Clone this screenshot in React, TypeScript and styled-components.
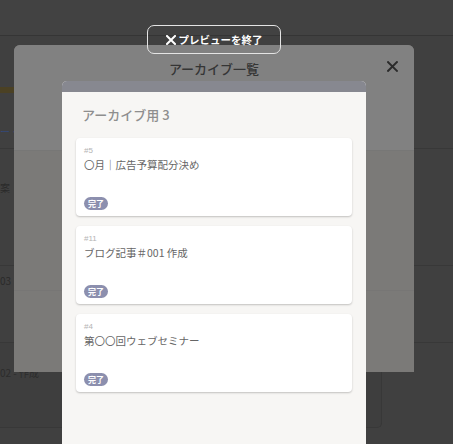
import React from 'react';
import styled, { createGlobalStyle } from 'styled-components';

const GlobalStyle = createGlobalStyle`
  html, body {
    margin: 0;
    padding: 0;
    background: #414141;
    font-family: "Noto Sans CJK JP", "Noto Sans", sans-serif;
  }
  * { box-sizing: border-box; }
`;

const Screen = styled.div`
  position: relative;
  width: 453px;
  height: 444px;
  overflow: hidden;
  background: #404040;
`;

// board behind the dimmed modal
const TopBar = styled.div`
  height: 36px;
  background: #424242;
  border-bottom: 1px solid #353535;
`;

const Board = styled.div`
  display: flex;
  flex-direction: column;
`;

const GoldStrip = styled.div`
  margin-top: 51px;
  height: 6px;
  width: 60px;
  background: #4b4124;
`;

const BoardRow = styled.div<{ $h: number; $pad: number }>`
  height: ${p => p.$h}px;
  padding-top: ${p => p.$pad}px;
  border-bottom: 1px solid #383838;
  font-size: 10px;
  line-height: 14px;
  color: #2a2a2a;
`;

const BlueText = styled.span`
  color: #34497a;
  font-size: 10px;
`;

const BoardCard = styled.div`
  margin-top: 0;
  width: 382px;
  height: 85px;
  border-radius: 0 0 5px 0;
  background: #3e3e3e;
  border-right: 1px solid #383838;
  border-bottom: 1px solid #383838;
  font-size: 10px;
  line-height: 14px;
  color: #2c2c2c;
  padding-top: 23px;
`;

// the dimmed modal
const Modal = styled.div`
  position: absolute;
  left: 14px;
  top: 45px;
  width: 400px;
  height: 327px;
  border-radius: 6px 6px 0 0;
  background: #7b7a78;
  overflow: hidden;
  display: flex;
  flex-direction: column;
`;

const ModalHeader = styled.div`
  height: 106px;
  background: #818181;
  border-bottom: 1px solid #777776;
  display: flex;
  justify-content: center;
  padding-top: 14px;
  position: relative;
`;

const ModalTitle = styled.h2`
  margin: 0;
  font-size: 13px;
  font-weight: 500;
  color: #353535;
  line-height: 20px;
`;

const CloseButton = styled.button`
  position: absolute;
  right: 15px;
  top: 14px;
  width: 14px;
  height: 14px;
  padding: 0;
  border: none;
  background: none;
  display: flex;
  align-items: center;
  justify-content: center;
`;

const ModalRow = styled.div`
  height: 140px;
  border-bottom: 1px solid #777675;
`;

// the previewed column
const Column = styled.section`
  position: absolute;
  left: 62px;
  top: 81px;
  width: 304px;
  height: 380px;
  border-radius: 5px 5px 0 0;
  background: #f7f6f4;
  overflow: hidden;
  display: flex;
  flex-direction: column;
`;

const ColumnBar = styled.div`
  height: 11px;
  background: #878890;
`;

const ColumnTitle = styled.h3`
  margin: 0;
  padding: 13px 20px 0;
  height: 46px;
  font-size: 13px;
  font-weight: 500;
  color: #8e8e8e;
  line-height: 20px;
`;

const CardList = styled.div`
  display: flex;
  flex-direction: column;
  gap: 10px;
  padding: 0 14px;
`;

const Card = styled.article`
  height: 78px;
  background: #ffffff;
  border-radius: 4px;
  box-shadow: 0 1px 2px rgba(0, 0, 0, 0.22);
  padding: 8px 8px 6px;
  display: flex;
  flex-direction: column;
`;

const CardId = styled.div`
  font-size: 8px;
  line-height: 10px;
  color: #b4b4b4;
  font-family: "Liberation Sans", "Noto Sans CJK JP", sans-serif;
`;

const CardName = styled.div`
  margin-top: 1px;
  font-size: 10.5px;
  font-weight: 400;
  line-height: 15px;
  color: #666666;
  flex: 1;
`;

const Badge = styled.span`
  align-self: flex-start;
  height: 13px;
  padding: 0 4px;
  border-radius: 7px;
  background: #8c8fae;
  color: #ffffff;
  font-size: 8px;
  font-weight: 700;
  line-height: 13px;
`;

const PreviewButton = styled.button`
  position: absolute;
  left: 147px;
  top: 25px;
  width: 134px;
  height: 29px;
  border: 1.5px solid #e4e4e4;
  border-radius: 7px;
  background: transparent;
  color: #ffffff;
  font-family: "Noto Sans CJK JP", sans-serif;
  font-size: 10.5px;
  font-weight: 700;
  display: flex;
  align-items: center;
  justify-content: center;
  gap: 3px;
  padding: 0;
`;

const cards = [
  { id: 5, name: '〇月｜広告予算配分決め' },
  { id: 11, name: 'ブログ記事＃001 作成' },
  { id: 4, name: '第〇〇回ウェブセミナー' },
];

const CrossIcon: React.FC<{ size: number; color: string; stroke: number }> = ({ size, color, stroke }) => (
  <svg width={size} height={size} viewBox="0 0 10 10">
    <path d="M1 1 L9 9 M9 1 L1 9" stroke={color} strokeWidth={stroke} strokeLinecap="square" />
  </svg>
);

const App: React.FC = () => {
  return (
    <>
      <GlobalStyle />
      <Screen>
        <TopBar />
        <Board>
          <GoldStrip />
          <BoardRow $h={56} $pad={32}>
            <BlueText>ー ク</BlueText>
          </BoardRow>
          <BoardRow $h={117} $pad={32}>案</BoardRow>
          <BoardRow $h={77} $pad={8}>03</BoardRow>
          <BoardCard>02 - 作成</BoardCard>
        </Board>

        <Modal>
          <ModalHeader>
            <ModalTitle>アーカイブ一覧</ModalTitle>
            <CloseButton>
              <CrossIcon size={11} color="#2b2b2b" stroke={1.8} />
            </CloseButton>
          </ModalHeader>
          <ModalRow />
        </Modal>

        <Column>
          <ColumnBar />
          <ColumnTitle>アーカイブ用 3</ColumnTitle>
          <CardList>
            {cards.map(card => (
              <Card key={card.id}>
                <CardId>#{card.id}</CardId>
                <CardName>{card.name}</CardName>
                <Badge>完了</Badge>
              </Card>
            ))}
          </CardList>
        </Column>

        <PreviewButton>
          <CrossIcon size={10} color="#ffffff" stroke={2} />
          プレビューを終了
        </PreviewButton>
      </Screen>
    </>
  );
};

export default App;
